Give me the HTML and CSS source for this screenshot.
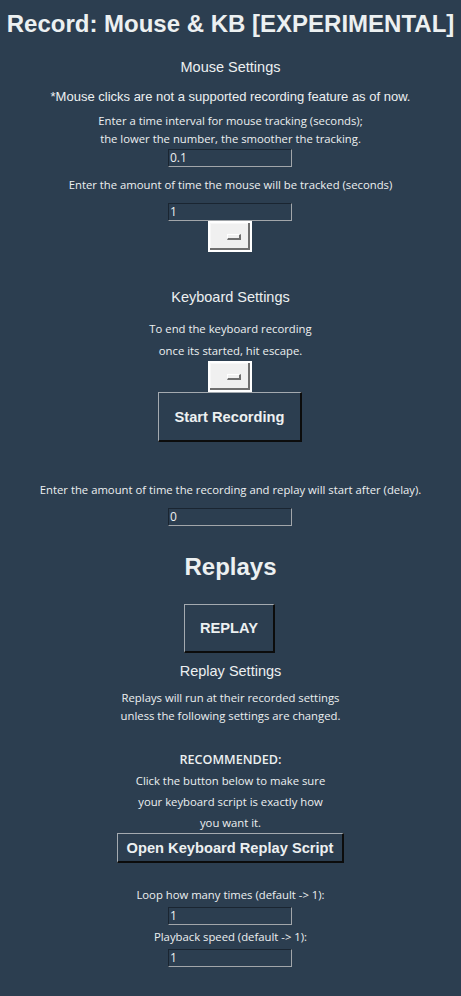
FILE: index.html
```html
<!DOCTYPE html>
<html>
<head>
<meta charset="utf-8">
<link rel="stylesheet" href="styles.css">
</head>
<body>
<main class="app">
  <div class="title">Record: Mouse &amp; KB [EXPERIMENTAL]</div>
  <div class="heading h-mouse">Mouse Settings</div>
  <div class="note">*Mouse clicks are not a supported recording feature as of now.</div>
  <div class="small s-interval">Enter a time interval for mouse tracking (seconds);</div>
  <div class="small">the lower the number, the smoother the tracking.</div>
  <div class="entry e-interval">0.1</div>
  <div class="small s-amount">Enter the amount of time the mouse will be tracked (seconds)</div>
  <div class="entry e-amount">1</div>
  <div class="optmenu"><span class="indicator"></span></div>
  <div class="heading h-kb">Keyboard Settings</div>
  <div class="small tall s-end">To end the keyboard recording</div>
  <div class="small mid">once its started, hit escape.</div>
  <div class="optmenu"><span class="indicator"></span></div>
  <div class="btn btn-start">Start Recording</div>
  <div class="small s-delay">Enter the amount of time the recording and replay will start after (delay).</div>
  <div class="entry e-delay">0</div>
  <div class="title t-replays">Replays</div>
  <div class="btn btn-replay">REPLAY</div>
  <div class="heading h-replay">Replay Settings</div>
  <div class="small s-run">Replays will run at their recorded settings</div>
  <div class="small">unless the following settings are changed.</div>
  <div class="small mid bold s-rec">RECOMMENDED:</div>
  <div class="small mid">Click the button below to make sure</div>
  <div class="small mid">your keyboard script is exactly how</div>
  <div class="small mid">you want it.</div>
  <div class="btn btn-open">Open Keyboard Replay Script</div>
  <div class="small s-loop">Loop how many times (default -&gt; 1):</div>
  <div class="entry e-loop">1</div>
  <div class="small s-speed">Playback speed (default -&gt; 1):</div>
  <div class="entry e-speed">1</div>
</main>
</body>
</html>
```
FILE: styles.css
```css
html, body {
  margin: 0;
  padding: 0;
  background: #2c3e50;
}
.app {
  width: 461px;
  min-height: 996px;
  display: flex;
  flex-direction: column;
  align-items: center;
  color: #ecf0f1;
  font-family: "Liberation Sans", Arial, sans-serif;
}
.title {
  margin-top: 9px;
  height: 30px;
  line-height: 30px;
  font-size: 24px;
  font-weight: bold;
  white-space: nowrap;
}
.heading {
  height: 20px;
  line-height: 20px;
  font-size: 14.5px;
}
.h-mouse { margin-top: 18px; }
.note {
  margin-top: 11px;
  height: 18px;
  line-height: 18px;
  font-size: 13px;
  white-space: nowrap;
}
.small {
  height: 18px;
  line-height: 18px;
  font-family: "Open Sans", "Noto Sans", sans-serif;
  font-size: 11.3px;
  white-space: nowrap;
}
.small.tall { height: 23px; line-height: 23px; }
.small.mid { height: 21px; line-height: 21px; }
.small.bold { font-weight: 600; font-size: 12.6px; }
.s-interval { margin-top: 6px; }
.entry {
  box-sizing: border-box;
  width: 124px;
  height: 18px;
  margin-left: -1px;
  border-top: 1px solid #1a2531;
  border-left: 1px solid #1a2531;
  border-right: 1px solid #a2a6aa;
  border-bottom: 1px solid #a2a6aa;
  padding-left: 1px;
  font-family: "Open Sans", "Noto Sans", sans-serif;
  font-size: 12px;
  line-height: 16px;
  color: #ecf0f1;
}
.e-interval { margin-top: 1px; }
.s-amount { margin-top: 9px; }
.e-amount { margin-top: 9px; }
.optmenu {
  box-sizing: border-box;
  width: 44px;
  height: 31px;
  margin-left: -1px;
  background: #f0f0f0;
  border: 2px solid #ffffff;
  box-shadow: inset -2px -2px 0 #6f6f6f, inset 1px 1px 0 #f7f7f7;
  display: flex;
  align-items: center;
  justify-content: flex-end;
  padding-right: 9px;
}
.indicator {
  box-sizing: border-box;
  width: 14px;
  height: 6px;
  margin-top: 1px;
  background: #f0f0f0;
  border-top: 1px solid #ffffff;
  border-left: 1px solid #ffffff;
  border-right: 2px solid #6f6f6f;
  border-bottom: 2px solid #6f6f6f;
}
.h-kb { margin-top: 35px; }
.s-end { margin-top: 10px; }
.btn {
  box-sizing: border-box;
  display: flex;
  align-items: center;
  justify-content: center;
  font-weight: bold;
  font-size: 14.67px;
  white-space: nowrap;
  background: #2c3e50;
  border-top: 1px solid #a4aab0;
  border-left: 1px solid #a4aab0;
  border-right: 2px solid #0c0c0c;
  border-bottom: 2px solid #0c0c0c;
}
.btn-start { width: 144px; height: 50px; margin-left: -1px; }
.s-delay { margin-top: 39px; }
.e-delay { margin-top: 9px; }
.t-replays { margin-top: 26px; }
.btn-replay { width: 91px; height: 49px; margin-top: 22px; margin-left: -2px; }
.h-replay { margin-top: 8px; }
.s-run { margin-top: 8px; }
.s-rec { margin-top: 24px; }
.btn-open { width: 227px; height: 30px; }
.s-loop { margin-top: 23px; }
.e-loop { margin-top: 3px; }
.s-speed { margin-top: 3px; }
.e-speed { margin-top: 3px; }
```
